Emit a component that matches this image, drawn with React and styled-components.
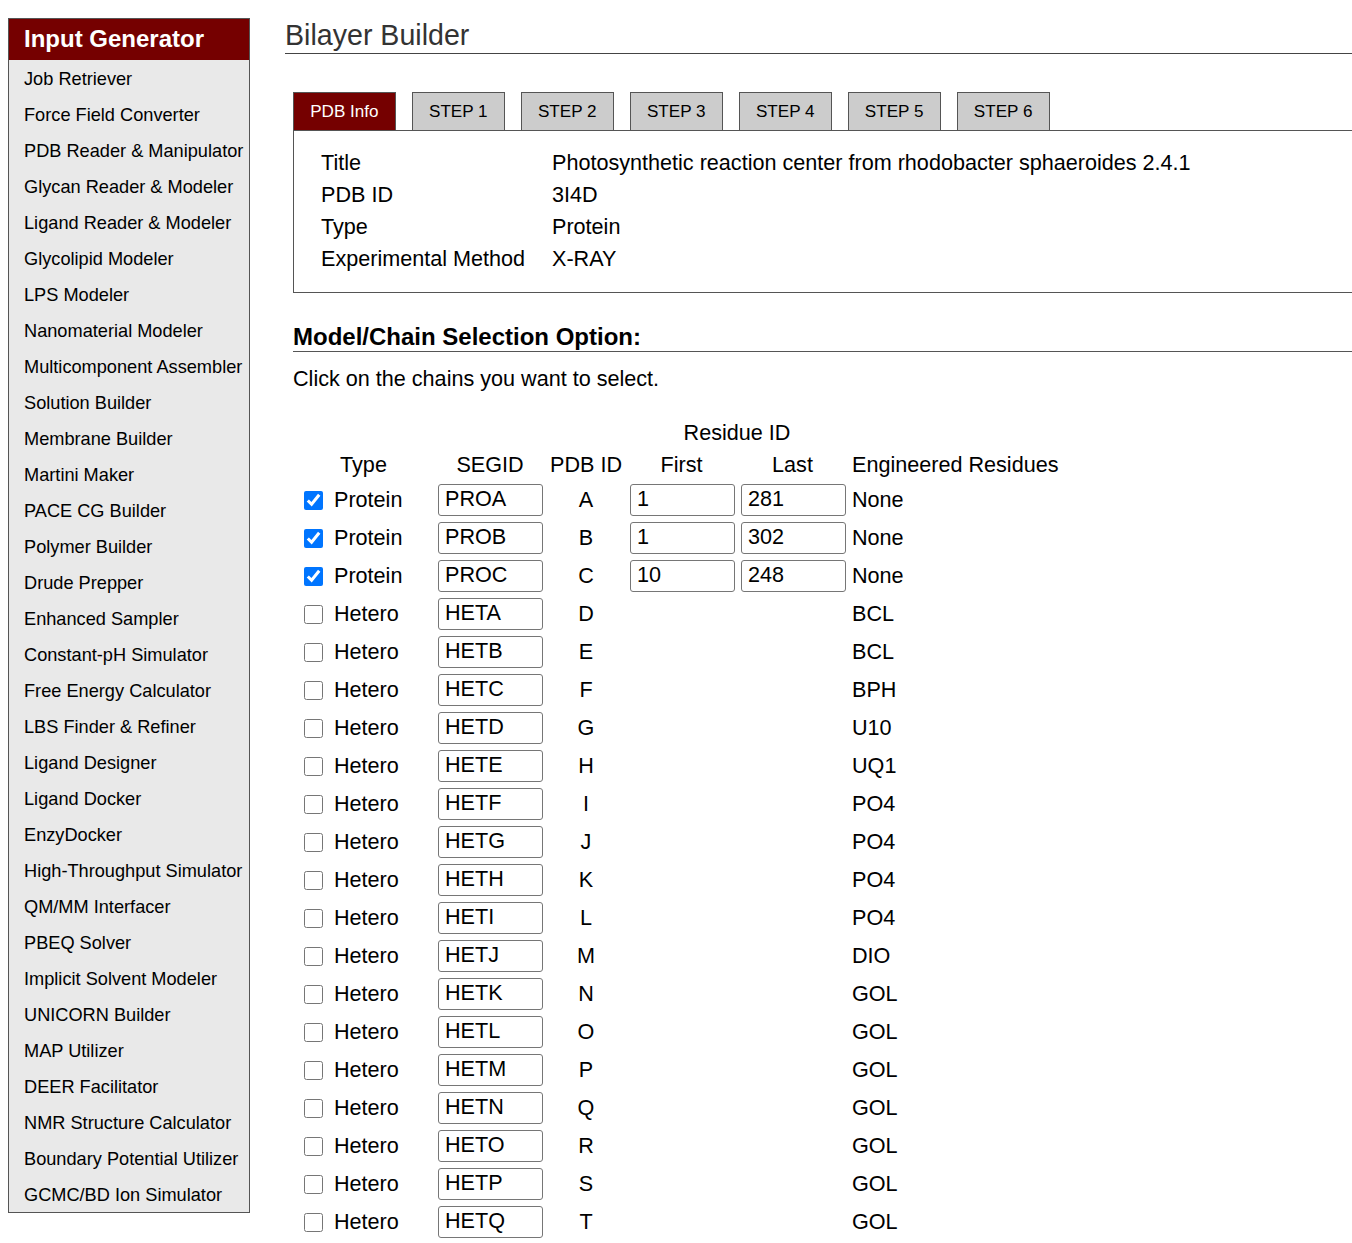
import React from "react";
import styled, { createGlobalStyle } from "styled-components";

const GlobalStyle = createGlobalStyle`
  html, body { margin: 0; padding: 0; background: #fff; }
  body { font-family: "Liberation Sans", Arial, sans-serif; color: #000; overflow: hidden; }
`;

const Page = styled.div`
  display: flex;
  align-items: flex-start;
  padding: 18px 0 0 8px;
  gap: 35px;
`;

const Sidebar = styled.nav`
  width: 240px;
  flex: none;
  border: 1px solid #555;
  background: #e9e9e9;
`;

const SideHeader = styled.div`
  background: #750000;
  color: #fff;
  font-weight: bold;
  font-size: 24px;
  height: 41px;
  line-height: 40px;
  padding-left: 15px;
`;

const SideItem = styled.div`
  height: 36px;
  line-height: 38px;
  padding-left: 15px;
  font-size: 18.2px;
  white-space: nowrap;
  color: #000;
  overflow: hidden;
`;

const Main = styled.main`
  flex: 1;
  min-width: 0;
`;

const Title = styled.h1`
  margin: 0;
  font-weight: normal;
  font-size: 28.6px;
  line-height: 35px;
  color: #333;
  border-bottom: 1px solid #444;
`;

const Tabs = styled.div`
  display: flex;
  gap: 16px;
  margin: 38px 0 0 8px;
`;

const Tab = styled.div`
  height: 37px;
  line-height: 37px;
  padding: 0 16.2px;
  font-size: 17.1px;
  border: 1px solid #555;
  border-bottom: none;
  background: ${(p) => (p.$active ? "#750000" : "#cccccc")};
  color: ${(p) => (p.$active ? "#fff" : "#000")};
`;

const InfoPanel = styled.div`
  margin-left: 8px;
  border: 1px solid #555;
  border-right: none;
  padding: 16px 0 17px 27px;
  display: grid;
  grid-template-columns: 231px auto;
  font-size: 21.6px;
  line-height: 32px;
`;

const SectionHead = styled.h3`
  margin: 30px 0 0 8px;
  font-size: 24px;
  font-weight: bold;
  line-height: 28px;
  border-bottom: 1px solid #555;
`;

const Hint = styled.p`
  margin: 14px 0 0 8px;
  font-size: 21.6px;
  line-height: 26px;
`;

const ChainGrid = styled.div`
  margin: 25px 0 0 8px;
  display: grid;
  grid-template-columns: 141px 112px 80px 111px 111px auto;
  font-size: 21.6px;
  width: max-content;
`;

const HeadCell = styled.div`
  height: 32px;
  line-height: 32px;
  padding: 0 4px;
  text-align: ${(p) => p.$align || "center"};
  grid-column: ${(p) => p.$span || "auto"};
  white-space: nowrap;
`;

const Cell = styled.div`
  height: 38px;
  display: flex;
  align-items: center;
  padding: 0 4px;
  justify-content: ${(p) => (p.$center ? "center" : "flex-start")};
  white-space: nowrap;
`;

const TypeCell = styled(Cell)`
  padding-left: 11px;
  gap: 11px;
`;

const Check = styled.input.attrs({ type: "checkbox" })`
  width: 19px;
  height: 19px;
  margin: 0;
  accent-color: #0075ff;
`;

const Field = styled.input.attrs({ type: "text" })`
  box-sizing: border-box;
  width: 105px;
  height: 32px;
  padding: 0 6px 3px;
  border: 1px solid #767676;
  border-radius: 3px;
  font-family: "Liberation Sans", Arial, sans-serif;
  font-size: 21.6px;
  color: #000;
  background: #fff;
`;

const tools = [
  "Job Retriever", "Force Field Converter", "PDB Reader & Manipulator", "Glycan Reader & Modeler",
  "Ligand Reader & Modeler", "Glycolipid Modeler", "LPS Modeler", "Nanomaterial Modeler",
  "Multicomponent Assembler", "Solution Builder", "Membrane Builder", "Martini Maker",
  "PACE CG Builder", "Polymer Builder", "Drude Prepper", "Enhanced Sampler",
  "Constant-pH Simulator", "Free Energy Calculator", "LBS Finder & Refiner", "Ligand Designer",
  "Ligand Docker", "EnzyDocker", "High-Throughput Simulator", "QM/MM Interfacer",
  "PBEQ Solver", "Implicit Solvent Modeler", "UNICORN Builder", "MAP Utilizer",
  "DEER Facilitator", "NMR Structure Calculator", "Boundary Potential Utilizer", "GCMC/BD Ion Simulator",
];

const tabs = ["PDB Info", "STEP 1", "STEP 2", "STEP 3", "STEP 4", "STEP 5", "STEP 6"];

const info = [
  ["Title", "Photosynthetic reaction center from rhodobacter sphaeroides 2.4.1"],
  ["PDB ID", "3I4D"],
  ["Type", "Protein"],
  ["Experimental Method", "X-RAY"],
];

const chains = [
  { type: "Protein", seg: "PROA", id: "A", first: "1", last: "281", eng: "None" },
  { type: "Protein", seg: "PROB", id: "B", first: "1", last: "302", eng: "None" },
  { type: "Protein", seg: "PROC", id: "C", first: "10", last: "248", eng: "None" },
  { type: "Hetero", seg: "HETA", id: "D", eng: "BCL" },
  { type: "Hetero", seg: "HETB", id: "E", eng: "BCL" },
  { type: "Hetero", seg: "HETC", id: "F", eng: "BPH" },
  { type: "Hetero", seg: "HETD", id: "G", eng: "U10" },
  { type: "Hetero", seg: "HETE", id: "H", eng: "UQ1" },
  { type: "Hetero", seg: "HETF", id: "I", eng: "PO4" },
  { type: "Hetero", seg: "HETG", id: "J", eng: "PO4" },
  { type: "Hetero", seg: "HETH", id: "K", eng: "PO4" },
  { type: "Hetero", seg: "HETI", id: "L", eng: "PO4" },
  { type: "Hetero", seg: "HETJ", id: "M", eng: "DIO" },
  { type: "Hetero", seg: "HETK", id: "N", eng: "GOL" },
  { type: "Hetero", seg: "HETL", id: "O", eng: "GOL" },
  { type: "Hetero", seg: "HETM", id: "P", eng: "GOL" },
  { type: "Hetero", seg: "HETN", id: "Q", eng: "GOL" },
  { type: "Hetero", seg: "HETO", id: "R", eng: "GOL" },
  { type: "Hetero", seg: "HETP", id: "S", eng: "GOL" },
  { type: "Hetero", seg: "HETQ", id: "T", eng: "GOL" },
];

export default function App() {
  return (
    <>
      <GlobalStyle />
      <Page>
        <Sidebar>
          <SideHeader>Input Generator</SideHeader>
          {tools.map((t) => (
            <SideItem key={t}>{t}</SideItem>
          ))}
        </Sidebar>
        <Main>
          <Title>Bilayer Builder</Title>
          <Tabs>
            {tabs.map((t, i) => (
              <Tab key={t} $active={i === 0}>{t}</Tab>
            ))}
          </Tabs>
          <InfoPanel>
            {info.map(([k, v]) => (
              <React.Fragment key={k}>
                <div>{k}</div>
                <div>{v}</div>
              </React.Fragment>
            ))}
          </InfoPanel>
          <SectionHead>Model/Chain Selection Option:</SectionHead>
          <Hint>Click on the chains you want to select.</Hint>
          <ChainGrid>
            <HeadCell $span="1 / 4" />
            <HeadCell $span="4 / 6">Residue ID</HeadCell>
            <HeadCell />
            <HeadCell>Type</HeadCell>
            <HeadCell>SEGID</HeadCell>
            <HeadCell>PDB ID</HeadCell>
            <HeadCell>First</HeadCell>
            <HeadCell>Last</HeadCell>
            <HeadCell $align="left">Engineered Residues</HeadCell>
            {chains.map((c) => (
              <React.Fragment key={c.seg}>
                <TypeCell>
                  <Check defaultChecked={c.type === "Protein"} />
                  <span>{c.type}</span>
                </TypeCell>
                <Cell><Field defaultValue={c.seg} /></Cell>
                <Cell $center>{c.id}</Cell>
                <Cell>{c.first !== undefined && <Field defaultValue={c.first} />}</Cell>
                <Cell>{c.last !== undefined && <Field defaultValue={c.last} />}</Cell>
                <Cell>{c.eng}</Cell>
              </React.Fragment>
            ))}
          </ChainGrid>
        </Main>
      </Page>
    </>
  );
}
